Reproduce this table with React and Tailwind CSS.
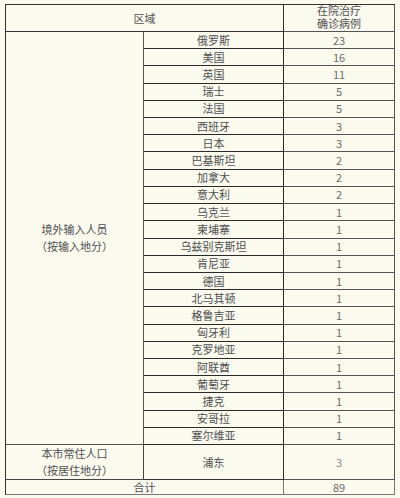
import React from "react";

const rows = [
  ["俄罗斯", "23"],
  ["美国", "16"],
  ["英国", "11"],
  ["瑞士", "5"],
  ["法国", "5"],
  ["西班牙", "3"],
  ["日本", "3"],
  ["巴基斯坦", "2"],
  ["加拿大", "2"],
  ["意大利", "2"],
  ["乌克兰", "1"],
  ["柬埔寨", "1"],
  ["乌兹别克斯坦", "1"],
  ["肯尼亚", "1"],
  ["德国", "1"],
  ["北马其顿", "1"],
  ["格鲁吉亚", "1"],
  ["匈牙利", "1"],
  ["克罗地亚", "1"],
  ["阿联酋", "1"],
  ["葡萄牙", "1"],
  ["捷克", "1"],
  ["安哥拉", "1"],
  ["塞尔维亚", "1"],
];

const font = { fontFamily: '"Noto Sans CJK SC", "Noto Sans", sans-serif' };
const tightFont = { fontFamily: '"Liberation Sans", "Noto Sans CJK SC", sans-serif' };

export default function App() {
  return (
    <div className="w-[400px] h-[498px] bg-[#fafaef] pt-[4px] pl-[5px] overflow-hidden" style={font}>
      <div className="grid w-[390px] h-[491px] grid-cols-[138px_140px_111px] grid-rows-[27px_repeat(24,minmax(0,1fr))_35px_15px] border-l border-t border-[#333] text-[11px] leading-[13px] text-[#4f4f4f]">
        <div className="col-span-2 flex items-center justify-center border-r border-b border-[#333]">区域</div>
        <div className="flex flex-col items-center justify-center border-r border-b border-[#555] leading-[13px]" style={tightFont}>
          <span>在院治疗</span>
          <span>确诊病例</span>
        </div>
        <div className="row-span-24 row-start-2 col-start-1 flex flex-col items-center justify-center border-r border-b border-[#555]">
          <span>境外输入人员</span>
          <span className="mt-[4px]">（按输入地分）</span>
        </div>
        {rows.map(([name, n], i) => (
          <React.Fragment key={i}>
            <div className="col-start-2 flex items-center justify-center border-r border-b border-[#2a2a2a]">{name}</div>
            <div className="col-start-3 flex items-center justify-center border-r border-b border-[#555] text-[#6a6a6a]">{n}</div>
          </React.Fragment>
        ))}
        <div className="flex flex-col items-center justify-center border-r border-b border-[#444]">
          <span>本市常住人口</span>
          <span className="mt-[4px]">（按居住地分）</span>
        </div>
        <div className="flex items-center justify-center border-r border-b border-[#333]">浦东</div>
        <div className="flex items-center justify-center border-r border-b border-[#555] text-[#8a8a8a]">3</div>
        <div className="col-span-2 flex items-center justify-center border-r border-b border-[#777]">合计</div>
        <div className="flex items-center justify-center border-r border-b border-[#777] text-[#6a6a6a]">89</div>
      </div>
    </div>
  );
}
